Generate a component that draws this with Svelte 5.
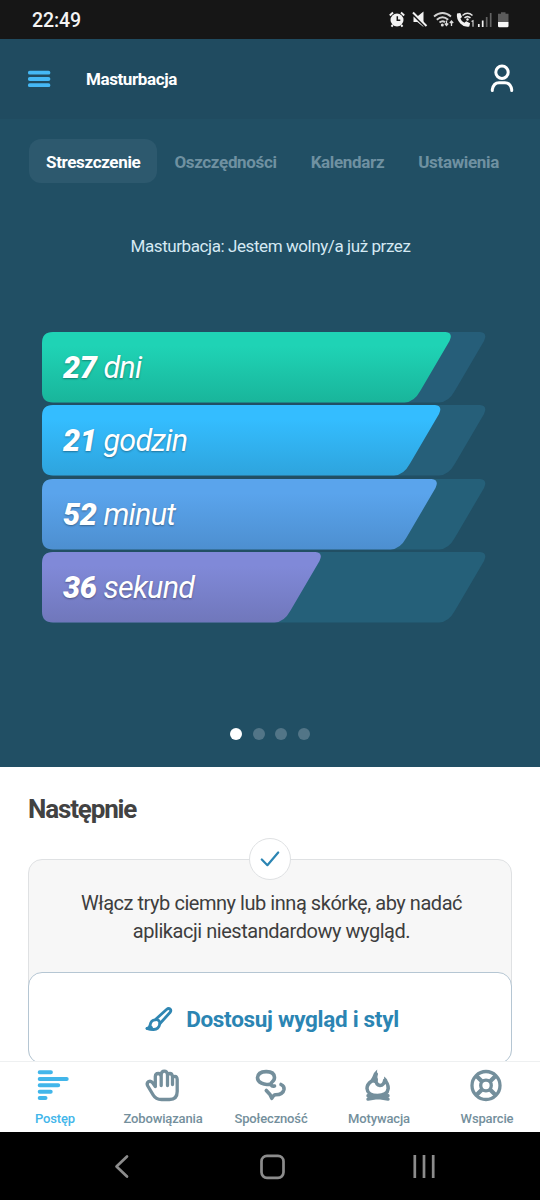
<script lang="ts">
  interface Bar {
    value: number;
    unit: string;
    width: number;
    from: string;
    to: string;
    track: string;
  }

  const tabs = ['Streszczenie', 'Oszczędności', 'Kalendarz', 'Ustawienia'];
  let activeTab = $state('Streszczenie');

  const bars: Bar[] = [
    { value: 27, unit: 'dni', width: 409.5, from: '#1fd3b5', to: '#19b59b', track: '#265e79' },
    { value: 21, unit: 'godzin', width: 399, from: '#34bdff', to: '#2ea4dd', track: '#265f79' },
    { value: 52, unit: 'minut', width: 395.5, from: '#5aa4ec', to: '#4d8fd0', track: '#256079' },
    { value: 36, unit: 'sekund', width: 279.5, from: '#8089d8', to: '#7077bb', track: '#256079' }
  ];

  const trackWidth = 444;

  const navItems = [
    { id: 'progress', label: 'Postęp' },
    { id: 'pledges', label: 'Zobowiązania' },
    { id: 'community', label: 'Społeczność' },
    { id: 'motivation', label: 'Motywacja' },
    { id: 'support', label: 'Wsparcie' }
  ];
  let activeNav = $state('progress');

  const slides = [0, 1, 2, 3];
  let activeSlide = $state(0);

  // Rounded bar with a slanted right edge
  function barPath(w: number) {
    return `M11 0H${w - 6}Q${w + 2} .8 ${w - 2} 9L${w - 31} 58.5Q${w - 37.5} 70.4 ${w - 47} 70.4H11Q0 70.4 0 59.4V11Q0 0 11 0Z`;
  }
</script>

<div class="screen">
  <div class="status-bar">
    <span class="clock">22:49</span>
    <svg class="status-icons" width="122" height="18" viewBox="388 11 122 18" fill="none">
      <!-- alarm -->
      <circle cx="397" cy="20" r="6.500" fill="#f2f2f2" />
      <path d="M397.300 16.300v4h3" stroke="#161616" stroke-width="1.500" />
      <path d="M389.800 15.400l3.200-2.800M404.200 15.400l-3.200-2.800M392.800 25l-1.300 1.600M401.200 25l1.300 1.600" stroke="#f2f2f2" stroke-width="2" />
      <!-- muted -->
      <path d="M413.500 16.500h3.800l6.200-5v15.500l-6.200-5h-3.800z" fill="#f2f2f2" />
      <path d="M412 13.500l14 14" stroke="#161616" stroke-width="2" />
      <path d="M413 12.500l13.500 13.500" stroke="#f2f2f2" stroke-width="2" />
      <!-- wifi -->
      <g stroke="#d2d2d2" stroke-width="1.900">
        <path d="M434 16.500q8.500-7 17 0M436.800 19.700q5.700-4.800 11.400 0M439.500 22.600q3-2.500 5.500-.300" />
      </g>
      <circle cx="442.300" cy="25" r="1.500" fill="#ddd" />
      <path d="M446.500 20.500v5M444.800 23.500l1.700 2 1.700-2M451.500 26v-5M449.800 23l1.700-2 1.700 2" stroke="#ddd" stroke-width="1.300" />
      <!-- wifi call -->
      <path d="M457 13.500l3.300-.6 1.700 4-1.600 1.500q1 3 4 4.400l1.800-1.500 3.900 2-.8 3.300q-4.800 1.200-9-3.200t-3.300-9.900z" fill="#f2f2f2" />
      <path d="M462.500 15.500q5-4.500 10 0M464.500 17.900q3-2.600 6 0" stroke="#e3e3e3" stroke-width="1.500" />
      <circle cx="467.500" cy="19.500" r="1.200" fill="#eee" />
      <path d="M471.500 21.500l1.500-.8v6" stroke="#ddd" stroke-width="1.100" />
      <!-- signal -->
      <path d="M478.800 24v3M482.700 20.500v6.500" stroke="#f2f2f2" stroke-width="1.700" />
      <path d="M486.700 17v10M490.700 13v14" stroke="#636363" stroke-width="1.700" />
      <!-- battery -->
      <path d="M501 12.200h4.500v1.500h3V22h-10.500v-8.300h3z" fill="#5b5b5b" />
      <path d="M498 22h10.500v3.900q0 1.300-1.300 1.300h-7.900q-1.300 0-1.300-1.300z" fill="#f7f7f7" />
    </svg>
  </div>

  <section class="hero">
    <header class="app-header">
      <button class="icon-button menu" aria-label="Menu">
        <svg width="24" height="18" viewBox="0 0 24 18" fill="none" stroke="#45b8f5" stroke-width="3.800" stroke-linecap="round">
          <path d="M2.800 2.700h18.700M2.800 9h18.700M2.800 15.200h18.700" />
        </svg>
      </button>
      <h1>Masturbacja</h1>
      <button class="icon-button profile" aria-label="Profil">
        <svg width="24" height="30" viewBox="0 0 24 30" fill="none" stroke="#fff" stroke-width="3" stroke-linecap="round">
          <circle cx="12" cy="8.300" r="6.200" />
          <path d="M2.300 26.500v-1Q3.500 18.700 9 18.700h6q5.500 0 6.700 6.800v1" />
        </svg>
      </button>
    </header>

    <nav class="tabs">
      {#each tabs as tab}
        <button class="tab" class:active={activeTab === tab} onclick={() => (activeTab = tab)}>{tab}</button>
      {/each}
    </nav>

    <p class="caption">Masturbacja: Jestem wolny/a już przez</p>

    <div class="bars">
      {#each bars as bar, i}
        <div class="bar">
          <svg class="shape" width="446" height="71" viewBox="0 0 446 71">
            <defs>
              <linearGradient id="fill-{i}" x1="0" y1="0" x2="0" y2="1">
                <stop offset=".2" stop-color={bar.from} />
                <stop offset="1" stop-color={bar.to} />
              </linearGradient>
            </defs>
            <path d={barPath(trackWidth)} fill={bar.track} />
            <path d={barPath(bar.width)} fill="url(#fill-{i})" />
          </svg>
          <span class="bar-label"><b>{bar.value}</b> {bar.unit}</span>
        </div>
      {/each}
    </div>

    <div class="dots">
      {#each slides as slide}
        <button class="dot" class:active={activeSlide === slide} aria-label="{slide + 1}" onclick={() => (activeSlide = slide)}></button>
      {/each}
    </div>
  </section>

  <main class="next">
    <h2>Następnie</h2>
    <div class="card">
      <span class="check">
        <svg width="20" height="16" viewBox="0 0 20 16" fill="none" stroke="#2b85b3" stroke-width="2.200" stroke-linecap="round" stroke-linejoin="round">
          <path d="M1.800 8.500l5.600 5.700L18.200 1.500" />
        </svg>
      </span>
      <p>Włącz tryb ciemny lub inną skórkę, aby nadać aplikacji niestandardowy wygląd.</p>
      <button class="action">
        <svg width="28" height="26" viewBox="0 0 28 26" fill="none" stroke="#2f86b2" stroke-width="2.800" stroke-linejoin="round" stroke-linecap="round">
          <path d="M10.500 13.500L21.500 3.500q2-1.600 3.500-.5t.2 3.300L15 17.500" />
          <path d="M10.300 13.800q2.200-.5 3.600 1t.8 3.500q-1 5.500-6.700 5.200-3.500 0-6-1 2.800-.8 3.200-3.700.6-4.600 5.100-5z" />
          <path d="M2 22.500q3 0 4-1.500l1 2z" fill="#2f86b2" />
        </svg>
        <span>Dostosuj wygląd i styl</span>
      </button>
    </div>
  </main>

  <nav class="bottom-nav">
    {#each navItems as item}
      <button class="nav-item {item.id}" class:active={activeNav === item.id} onclick={() => (activeNav = item.id)}>
        <svg width="36" height="34" viewBox="0 0 36 34" fill="none" stroke="currentColor" stroke-linecap="round" stroke-linejoin="round">
          {#if item.id === 'progress'}
            <path stroke-width="4" d="M2.700 3.300h11.200M2.700 9.900h27M2.700 16.300h18.500M2.700 22.700h11M2.700 29.100h5.800" />
          {:else if item.id === 'pledges'}
            <path stroke-width="3.300" d="M10.300 17.500V7.500Q10.500 4.500 13.200 4.500T16.200 7.500V16.500M16.200 7V5.500Q16.500 2.200 19.300 2.200T22.500 5.500V16.500M22.500 6.500Q23 4.500 25 4.500T27.500 7.500V15.500M27.500 9Q28 7.300 30 7.300T32.200 10.500V22.500Q32.200 30.500 24.500 30.500H16.500Q10.800 30.500 8.200 26L2.800 17Q1.200 14 3.700 12.500 6 11.500 7.800 14L10.300 17.500" />
          {:else if item.id === 'community'}
            <path stroke-width="3.600" d="M16.500 15.200Q12 16 8.500 14.200 4.500 12.200 4.500 8.700 5 2.800 13 2.600T21.500 8.300Q21.500 11.300 19.300 12.800 17.500 14.300 18.200 16 19 17.600 21.500 17" />
            <path stroke-width="3.600" d="M28 15.500Q31.500 17.200 31 20.300 30 25.500 22.500 25.800 20.500 25.900 18.800 29.300L17 25.500 13.300 21.500" />
          {:else if item.id === 'motivation'}
            <path stroke-width="3.500" d="M15.300 5Q14.500 9.500 10.500 12.300 6 15.300 6 19.500 6.500 26.500 16.500 26.500T27.200 19.500Q27.200 14.500 23.700 11.300 23 16.300 19 16.500 14.800 16 14.800 10" />
            <path stroke="none" fill="currentColor" d="M16.200 .5Q13 3 11.500 7.500L9 12.500l6 2 2-3.500Q15 6 16.200 .5zM23 7.500q2 1.300 3.600 3.800L23 14.500q.7-3 0-7z" />
            <path stroke-width="3.400" d="M7 26.800l20 3.300M27 26.800L7 30.100" />
          {:else}
            <circle cx="17" cy="16.500" r="14" stroke-width="3.300" />
            <circle cx="17" cy="16.500" r="5.300" stroke-width="3.300" />
            <path stroke-width="4.200" stroke-linecap="butt" d="M7 6.500l6 6M27 6.500l-6 6M7 26.500l6-6M27 26.500l-6-6" />
          {/if}
        </svg>
        <span>{item.label}</span>
      </button>
    {/each}
  </nav>

  <div class="system-nav">
    <svg width="540" height="68" viewBox="0 0 540 68" fill="none" stroke="#8c8c8c" stroke-width="2.700" stroke-linecap="round" stroke-linejoin="round">
      <path d="M127 24.500l-10.500 10 10.500 10" />
      <rect x="261.500" y="23.800" width="22" height="22" rx="5.500" />
      <path stroke-linecap="butt" d="M414.800 23v23M424 23v23M433.200 23v23" />
    </svg>
  </div>
</div>

<style>
  :global(body) {
    background: #fff;
  }

  .screen {
    display: flex;
    flex-direction: column;
    width: 540px;
    height: 1200px;
    overflow: hidden;
    background: #fff;
    font-family: Roboto, 'Liberation Sans', sans-serif;
  }

  .screen * {
    box-sizing: border-box;
  }

  button {
    border: 0;
    padding: 0;
    background: none;
    font-family: inherit;
    cursor: pointer;
  }

  svg {
    display: block;
  }

  .status-bar {
    display: flex;
    flex: none;
    align-items: center;
    justify-content: space-between;
    height: 39px;
    padding: 1px 30px 0 32px;
    background: #161616;
  }

  .clock {
    color: #f4f4f4;
    font-size: 19.5px;
    font-weight: 500;
    letter-spacing: -0.1px;
  }

  .hero {
    display: flex;
    flex: none;
    flex-direction: column;
    height: 728px;
    background: #214f64;
  }

  .app-header {
    display: flex;
    flex: none;
    align-items: center;
    height: 80px;
    padding: 0 26px 0 27px;
    background: #204b60;
  }

  .app-header h1 {
    flex: 1;
    margin: 0 0 1px 35px;
    color: #fff;
    font-size: 17px;
    font-weight: 700;
    letter-spacing: -0.4px;
  }

  .tabs {
    display: flex;
    flex: none;
    margin: 20px 0 0 29px;
  }

  .tab {
    height: 44px;
    padding: 2px 17px 0;
    border-radius: 12px;
    color: #6f91a1;
    font-size: 17px;
    font-weight: 700;
    letter-spacing: -0.34px;
  }

  .tab.active {
    background: #2d596e;
    color: #fff;
  }

  .caption {
    margin: 52px 0 0 1px;
    color: #d5e9f3;
    font-size: 17px;
    line-height: 22px;
    letter-spacing: -0.42px;
    text-align: center;
  }

  .bars {
    display: flex;
    flex-direction: column;
    gap: 2.9px;
    margin: 75px 0 0 42px;
  }

  .bar {
    display: grid;
    height: 70.4px;
  }

  .bar > * {
    grid-area: 1 / 1;
  }

  .bar-label {
    align-self: center;
    padding: 1px 0 0 21px;
    color: #fff;
    font-size: 30.5px;
    font-style: italic;
    font-weight: 400;
    line-height: 36px;
    letter-spacing: -0.75px;
    text-shadow: 0 1px 2px rgba(0, 0, 0, 0.35);
  }

  .bar-label b {
    font-weight: 900;
    letter-spacing: -0.3px;
  }

  .dots {
    display: flex;
    justify-content: center;
    gap: 10.5px;
    margin: 106px 0 0;
  }

  .dot {
    width: 12px;
    height: 12px;
    border-radius: 50%;
    background: #527587;
  }

  .dot.active {
    background: #fff;
  }

  .next {
    flex: 1;
    min-height: 0;
    overflow: hidden;
    padding: 26px 28px 0;
  }

  .next h2 {
    margin: 0;
    color: #424242;
    font-size: 26px;
    font-weight: 700;
    line-height: 32px;
    letter-spacing: -1.15px;
  }

  .card {
    position: relative;
    margin-top: 34px;
    border: 1.500px solid #dfe1e3;
    border-radius: 14px;
    background: #f7f7f7;
  }

  .check {
    position: absolute;
    top: -22px;
    left: 50%;
    display: flex;
    align-items: center;
    justify-content: center;
    width: 42px;
    height: 42px;
    border: 1.500px solid #dfe1e3;
    border-radius: 50%;
    background: #fff;
    transform: translateX(-50%);
  }

  .card p {
    margin: 29px 39px 27px 42px;
    color: #3e3e3e;
    font-size: 20px;
    line-height: 28px;
    letter-spacing: -0.46px;
    text-align: center;
  }

  .action {
    display: flex;
    align-items: center;
    justify-content: center;
    gap: 13px;
    width: calc(100% + 2px);
    height: 92px;
    margin: 0 -1px -1px;
    padding: 1px 0 0 4px;
    border: 1.500px solid #b5c6d3;
    border-radius: 14px;
    background: #fff;
    color: #2b85b3;
    font-size: 22.5px;
    font-weight: 700;
    letter-spacing: -0.3px;
  }

  .bottom-nav {
    display: grid;
    flex: none;
    grid-template-columns: repeat(5, 108px);
    height: 71px;
    padding-left: 1px;
    border-top: 1px solid #eef0f1;
    background: #fff;
  }

  .nav-item {
    display: flex;
    flex-direction: column;
    align-items: center;
    gap: 7px;
    padding-top: 7px;
    color: #748f9c;
    font-size: 13px;
    font-weight: 500;
    line-height: 18px;
    letter-spacing: -0.15px;
  }

  .nav-item.active {
    color: #42b6ea;
  }

  .system-nav {
    flex: none;
    height: 68px;
    background: #000;
  }
</style>
